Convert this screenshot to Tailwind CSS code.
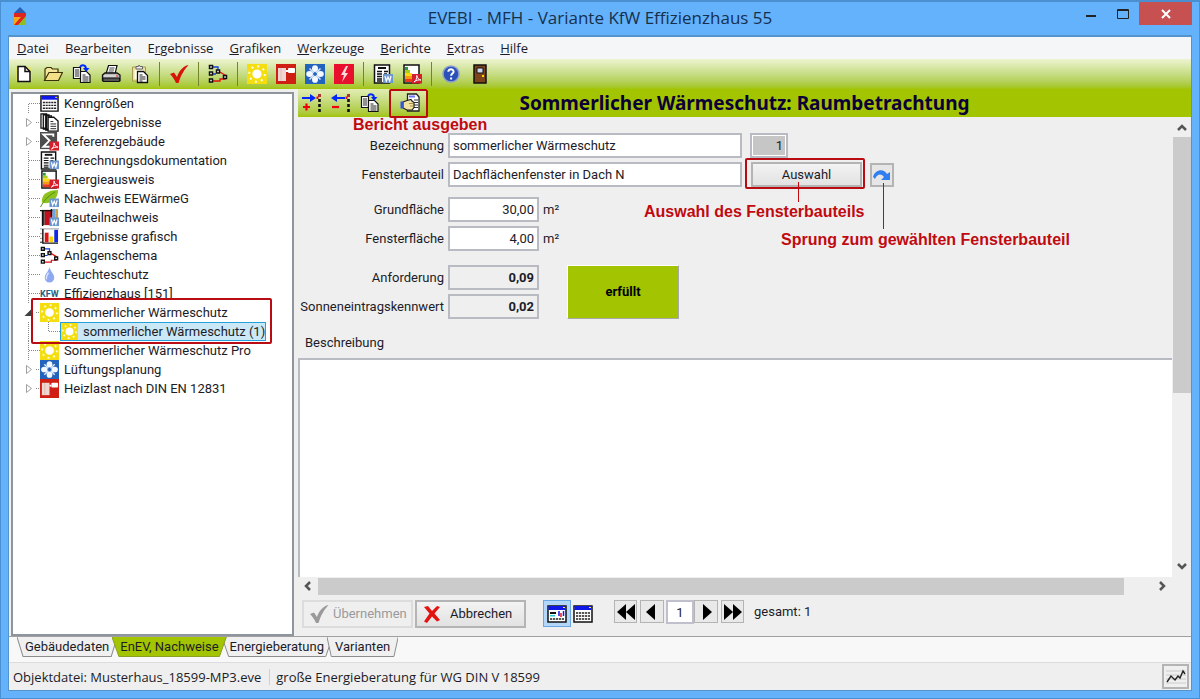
<!DOCTYPE html>
<html lang="de">
<head>
  <meta charset="UTF-8" />
  <meta name="viewport" content="width=device-width, initial-scale=1.0"/>
  <title>EVEBI - MFH - Variante KfW Effizienzhaus 55</title>
  <script src="https://cdn.jsdelivr.net/npm/@tailwindcss/browser@4"></script>
</head>
<body class="min-h-screen flex flex-col bg-[#64b2fc] border border-t-2 border-[#4a90d0] px-[7px] pb-[7px] font-[Roboto,sans-serif] text-[13px] leading-4 text-[#1c1c28]">

  <!-- Icons -->
  <svg class="hidden">
    <symbol id="new" viewBox="0 0 20 20"><path d="M2 3h16v14H2z" fill="#f6e34a" opacity=".5"/><path d="M4 2.500h7l5 5V17.500H4z" fill="#fff" stroke="#111" stroke-width="1.500"/><path d="M11 2.500v5h5" fill="none" stroke="#111" stroke-width="1.500"/></symbol>
    <symbol id="open" viewBox="0 0 20 20"><path d="M2 16V5l2-1.500h4L9.500 5H15v3" fill="#f4e79a" stroke="#3b3208" stroke-width="1.200"/><path d="M1.500 16.500 6 8.500h13.500L15.500 16.500z" fill="#f5e08a" stroke="#3b3208" stroke-width="1.200"/></symbol>
    <symbol id="copy" viewBox="0 0 20 20"><path d="M1.500 3.500h7v11h-7z" fill="#fff" stroke="#111" stroke-width="1.200"/><path d="M3 6h4M3 8h4M3 10h4M3 12h4" stroke="#222"/><path d="M8.500 7.500h6l3.500 3.500v7.500H8.500z" fill="#fff" stroke="#111" stroke-width="1.200"/><path d="M10.500 11h3M10.500 13h6M10.500 15h6M10.500 17h6" stroke="#222"/><path d="M8 3c2-3 6-2 6 2" fill="none" stroke="#0026ff" stroke-width="2"/><path d="M11 4h6.500L14 8z" fill="#0026ff"/></symbol>
    <symbol id="print" viewBox="0 0 20 20"><path d="M5 10 7.500 1.500H16L14 10z" fill="#fff" stroke="#111" stroke-width="1.200"/><path d="M8.500 4h5M8 6h5M7.500 8h5" stroke="#444"/><path d="M1.500 11 4 9h12l3 2v5.500h-17.500z" fill="#b9b9b9" stroke="#111" stroke-width="1.300"/><path d="M2 14h16.500v3.500H2z" fill="#565656" stroke="#111"/><path d="M3 12h13" stroke="#eee"/><path d="M15 12h2" stroke="#e22"/></symbol>
    <symbol id="paste" viewBox="0 0 20 20"><path d="M2.500 3h13v14h-13z" fill="#ecdf9c" stroke="#a79a55"/><path d="M6 2.500h2.500L9 1l1 1.500h2.500V5H6z" fill="#eee" stroke="#666"/><path d="M4.500 6h9v9h-9z" fill="#fffef0"/><path d="M7.500 7.500h6l4 4v7h-10z" fill="#fff" stroke="#111" stroke-width="1.300"/><path d="M9.500 11h3M9.500 13h6M9.500 15h6M9.500 17h3" stroke="#222"/></symbol>
    <symbol id="check" viewBox="0 0 20 20"><path d="M1 10l4-1.500L8 13C10 7 14 2 19.500 1 15 6 12 11 9.500 19H7C5.500 15.500 3.500 12.500 1 10z" fill="currentColor"/></symbol>
    <symbol id="scheme" viewBox="0 0 20 20"><path d="M4 3h6v5h2M4 10h4" fill="none" stroke="#1440e0" stroke-width="1.300"/><path d="M4 17h8v-2h5v-4l-5-3" fill="none" stroke="#e01010" stroke-width="1.300"/><path d="M1.500 1.500h3v3h-3zM1.500 8h3v3h-3zM1.500 15h3v3h-3zM8.500 6h3v3h-3zM15.500 11.500h3v3h-3z" fill="#fff" stroke="#111" stroke-width="1.500"/></symbol>
    <symbol id="sun" viewBox="0 0 20 20"><path d="M0 0h20v20H0z" fill="#f4de10"/><circle cx="10" cy="10" r="7.800" fill="none" stroke="#fffbe0" stroke-width="2" stroke-dasharray="2 4.126"/><circle cx="10" cy="10" r="4.600" fill="#fff"/></symbol>
    <symbol id="heat" viewBox="0 0 20 20"><path d="M0 0h20v20H0z" fill="#cf1f12"/><path d="M2 4h8v13H2z" fill="#efd6d2"/><path d="M5 4v13" stroke="#d9b4af" stroke-width=".8"/><path d="M10 6h2v2h-2z" fill="#fff"/><rect x="12" y="4" width="7" height="5" rx="1" fill="#fff"/></symbol>
    <symbol id="fan" viewBox="0 0 20 20"><path d="M0 0h20v20H0z" fill="#2463bd"/><g fill="#f4f8ff"><ellipse cx="10" cy="4.600" rx="3" ry="3.400"/><ellipse cx="15.400" cy="10" rx="3.400" ry="3"/><ellipse cx="10" cy="15.400" rx="3" ry="3.400"/><ellipse cx="4.600" cy="10" rx="3.400" ry="3"/></g><path d="m4.500 4.500 11 11M15.500 4.500l-11 11" stroke="#dce8fa" stroke-width="1.500"/><circle cx="10" cy="10" r="1.800" fill="#2463bd"/></symbol>
    <symbol id="flash" viewBox="0 0 20 20"><path d="M0 0h20v20H0z" fill="#e8102c"/><path d="M12 2 7 11h3l-2 7 6-9h-3l3-7z" fill="#ffd9de"/></symbol>
    <symbol id="doc" viewBox="0 0 20 20"><path d="M1.500 1h15v18h-15z" fill="#fff" stroke="#111" stroke-width="1.500"/><path d="M5 4h8" stroke="#111" stroke-width="2"/><path d="M4 7.500h5M4 10h5M11 7.500h4M4 12.500h5M4 15h5M4 17h5M11 10h3" stroke="#111" stroke-width="1.300"/></symbol>
    <symbol id="word" viewBox="0 0 20 20"><path d="M10 10h10v9H10z" fill="#6c96cf"/><path d="m12 12 1.300 5 1.700-4 1.700 4 1.300-5" fill="none" stroke="#fff" stroke-width="1.300"/></symbol>
    <symbol id="pdf" viewBox="0 0 20 20"><path d="M10 10h10v9.500H10z" fill="#d3202c"/><path d="M12 18c2-1 3-4 2.800-6.500C15 14 17 16 19 16c-2-.5-5 .3-7 2z" fill="none" stroke="#fff"/></symbol>
    <symbol id="energy" viewBox="0 0 20 20"><path d="M2 1h15v18H2z" fill="#fff" stroke="#111" stroke-width="1.500"/><path d="M3 3h3v3H3z" fill="#2f9a3c"/><path d="M3 6h5v3H3z" fill="#a6cf1c"/><path d="M3 9h7v3H3z" fill="#f9dc10"/><path d="M3 12h8v3H3z" fill="#f59a12"/><path d="M3 15h9v3H3z" fill="#ea3a1c"/></symbol>
    <symbol id="help" viewBox="0 0 20 20"><circle cx="10" cy="10" r="8" fill="#2a51b8" stroke="#8fa0cc" stroke-width="1.500"/><path d="M7.300 7.800c0-3.500 5.500-3.300 5.300 0-.1 1.700-2.500 2-2.500 4M10.100 13.500v2" fill="none" stroke="#fff" stroke-width="2"/></symbol>
    <symbol id="door" viewBox="0 0 20 20"><path d="M4 1h12v18H4z" fill="#7d431b" stroke="#111" stroke-width="1.500"/><path d="M7 4h6v5H7z" fill="#ccd8f0" stroke="#111"/><path d="M12 12h2" stroke="#ffd800" stroke-width="2"/></symbol>
    <symbol id="addrow" viewBox="0 0 20 20"><path d="M0 5h10" stroke="#0026ff" stroke-width="2"/><path d="m8 1 6 4-6 4z" fill="#0026ff"/><path d="M1 14h7M4.500 10.500v7" stroke="#f00010" stroke-width="2.200"/><path d="M17.500 6v13" stroke="#111" stroke-width="2.600" stroke-dasharray="3 2"/><path d="M14.500 3.500h2V6h-2z" fill="#f00010"/><path d="M16 1h3v3h-3z" fill="#a33"/></symbol>
    <symbol id="delrow" viewBox="0 0 20 20"><path d="M4 5h10" stroke="#0026ff" stroke-width="2"/><path d="M6 1 0 5l6 4z" fill="#0026ff"/><path d="M1 14h7" stroke="#f00010" stroke-width="2.200"/><path d="M17.500 6v13" stroke="#111" stroke-width="2.600" stroke-dasharray="3 2"/><path d="M14.500 3.500h2V6h-2z" fill="#f00010"/><path d="M16 1h3v3h-3z" fill="#a33"/></symbol>
    <symbol id="report" viewBox="0 0 20 20"><path d="M7.500 1h9l2.500 3v14H7.500z" fill="#fff" stroke="#222" stroke-width="1.300"/><path d="M9 3.500h6" stroke="#6a78ff" stroke-width="2"/><path d="M14 7h4M14 9.500h4M14 12h4M14 14.500h4" stroke="#333"/><path d="M3 9l4-1.500 4-1 1 1.500 2 1.500v5l-2 2.500H7L3 15z" fill="#f3e3a0" stroke="#222" stroke-width="1.200"/><path d="M9 10.500h4M10 13h4" stroke="#8a7a3c" stroke-width=".8"/><path d="M0.500 8.500H3v7H.5z" fill="#3656d8"/></symbol>
    <symbol id="table" viewBox="0 0 20 20"><path d="M1 2h18v16H1z" fill="#fff" stroke="#111" stroke-width="1.500"/><path d="M1.500 2h17v4h-17z" fill="#1018e8"/><path d="M16 3h2v1h-2z" fill="#fe3"/><path d="M3 9h14M3 12h14M3 15h14" stroke="#222" stroke-width="1.500" stroke-dasharray="2.200 .75"/></symbol>
    <symbol id="form" viewBox="0 0 20 20"><path d="M1 2h18v16H1z" fill="#fff" stroke="#111" stroke-width="1.500"/><path d="M1.500 2h17v4h-17z" fill="#1018e8"/><path d="M16 3h2v1h-2z" fill="#fe3"/><path d="M3 8h6v2H3z" fill="#111"/><path d="M3 11h5v1.500H3z" fill="#2cc"/><path d="M12 7v5M16.500 7v5" stroke="#1018e8" stroke-width="1.500"/><path d="M14 9v4" stroke="#e11" stroke-width="1.500"/><path d="M3 15h14" stroke="#222" stroke-width="1.500" stroke-dasharray="2.200 .75"/></symbol>
    <symbol id="pages" viewBox="0 0 20 20"><path d="M1 1h6v15H1zM3.500 2h6v15h-6zM6 3h6v15H6z" fill="#eee" stroke="#111" stroke-width="1.300"/><path d="M8.500 4.500h6l4.500 4v10.500H8.500z" fill="#fff" stroke="#111" stroke-width="1.400"/><path d="M11 9h3M11 11.500h6M11 14h6M11 16.500h6" stroke="#222"/></symbol>
    <symbol id="sigma" viewBox="0 0 20 20"><path d="M0 0h18v18H0z" fill="#4d4d4d"/><path d="M14 5V2.500H3.500L10 9l-6.500 6.500H12" fill="none" stroke="#fff" stroke-width="2"/></symbol>
    <symbol id="leaf" viewBox="0 0 20 20"><path d="M2 14C1 6 8 1 19 1c0 9-6 14-14 14z" fill="#8dc21f"/><path d="M.5 19C4 12 9 7 16 3" fill="none" stroke="#4f8a10"/></symbol>
    <symbol id="wall" viewBox="0 0 20 20"><path d="M2 2h3v16H2z" fill="#444"/><path d="M5 2h8v16H5z" fill="#c30f1b"/><path d="M13 1h3v17h-3z" fill="#69a7e4"/><path d="M16 1h3v10h-3z" fill="#c9a24c"/><path d="M0 2h13v1.500H0zM2 2h1.500v17H2z" fill="#111"/><path d="M12 1v8" stroke="#111" stroke-width="1.500"/></symbol>
    <symbol id="chart" viewBox="0 0 20 20"><path d="M0 2h20M0 7h3M0 12h3" stroke="#999"/><path d="M3 2v15h16" fill="none" stroke="#111" stroke-width="1.500"/><path d="M5 6h4v10H5z" fill="#e01414"/><path d="M10 10h4v6h-4z" fill="#f2d30c"/><path d="M15 3h4v13h-4z" fill="#1428e0"/><path d="M0 16h3" stroke="#111"/></symbol>
    <symbol id="drop" viewBox="0 0 20 20"><path d="M10 2c1 5 5 7 5 11.500a5 5 0 0 1-10 0C5 9 9 7 10 2z" fill="#8fa8f2"/><path d="M9 8c-2 3-3 5-2 7" stroke="#dbe4ff" stroke-width="1.500" fill="none"/></symbol>
    <!-- Tree connectors -->
    <symbol id="t-first" viewBox="0 0 20 19"><path d="M8.500 19V9.500H20" fill="none" stroke="#888" stroke-dasharray="1 1"/></symbol>
    <symbol id="t-item" viewBox="0 0 20 19"><path d="M8.500 0v19M9 9.500h11" fill="none" stroke="#888" stroke-dasharray="1 1"/></symbol>
    <symbol id="t-last" viewBox="0 0 20 19"><path d="M8.500 0v9.500H20" fill="none" stroke="#888" stroke-dasharray="1 1"/></symbol>
    <symbol id="t-closed" viewBox="0 0 20 19"><path d="M6.500 5.500v8l5-4z" fill="#fff" stroke="#a0a0a0"/><path d="M16 9.500h4" stroke="#888" stroke-dasharray="1 1"/></symbol>
    <symbol id="t-open" viewBox="0 0 20 19"><path d="M11.500 6v7h-7z" fill="#404040"/><path d="M16 9.500h4" stroke="#888" stroke-dasharray="1 1"/></symbol>
  </svg>

  <!-- Title bar -->
  <header class="grid grid-cols-[1fr_auto_1fr] h-[33px]">
    <svg class="w-4 h-5 ml-1 mt-1" viewBox="0 0 16 20"><path d="M2 7 8 1l6 6z" fill="#2c5fb4"/><path d="M2 7h12v12H2z" fill="#f6a817"/><path d="M14 9v10H5z" fill="#8cbf26"/><path d="M2 7h12v3L6 19H2l7-8H2z" fill="#e0261c"/></svg>
    <h1 class="text-[17px] leading-8 text-[#16304c] font-['Open_Sans','Noto_Sans',sans-serif]">EVEBI - MFH - Variante KfW Effizienzhaus 55</h1>
    <div class="flex justify-end">
      <button aria-label="Minimieren" class="w-8 h-6 flex items-center justify-center"><svg class="w-3 h-3" viewBox="0 0 12 12"><path d="M1 8h10" stroke="#222" stroke-width="2"/></svg></button>
      <button aria-label="Maximieren" class="w-8 h-6 flex items-center justify-center"><svg class="w-3 h-3" viewBox="0 0 12 12"><path d="M.5 1.500h11v9H.5zM1 2.500h10" fill="none" stroke="#222"/></svg></button>
      <button aria-label="Schließen" class="w-[53px] h-[23px] bg-[#c75050] flex items-center justify-center"><svg class="w-3 h-3" viewBox="0 0 12 12"><path d="m2 2 8 8M10 2l-8 8" stroke="#fff" stroke-width="2"/></svg></button>
    </div>
  </header>

  <div class="flex-1 flex flex-col bg-[#efefef] border border-t-2 border-[#5593cd]">
    <!-- Menu -->
    <nav class="flex gap-4 h-[22px] items-center px-2 bg-[#f4f6f8] font-['Open_Sans','Noto_Sans',sans-serif]">
      <a href="#"><u>D</u>atei</a>
      <a href="#">Be<u>a</u>rbeiten</a>
      <a href="#">E<u>r</u>gebnisse</a>
      <a href="#"><u>G</u>rafiken</a>
      <a href="#"><u>W</u>erkzeuge</a>
      <a href="#"><u>B</u>erichte</a>
      <a href="#"><u>E</u>xtras</a>
      <a href="#"><u>H</u>ilfe</a>
    </nav>

    <!-- Toolbar -->
    <div class="flex items-center gap-[9px] h-[30px] px-[5px] bg-linear-to-b from-[#edf4d0] to-[#a3c400]">
      <button aria-label="Neu"><svg class="block size-5"><use href="#new"/></svg></button>
      <button aria-label="Öffnen"><svg class="block size-5"><use href="#open"/></svg></button>
      <button aria-label="Kopieren"><svg class="block size-5"><use href="#copy"/></svg></button>
      <button aria-label="Drucken"><svg class="block size-5"><use href="#print"/></svg></button>
      <button aria-label="Einfügen"><svg class="block size-5"><use href="#paste"/></svg></button>
      <span class="w-px h-6 bg-[#76842c]"></span>
      <button aria-label="Prüfen" class="text-[#d81408]"><svg class="block size-5"><use href="#check"/></svg></button>
      <span class="w-px h-6 bg-[#76842c]"></span>
      <button aria-label="Anlagenschema"><svg class="block size-5"><use href="#scheme"/></svg></button>
      <span class="w-px h-6 bg-[#76842c]"></span>
      <button aria-label="Sommerlicher Wärmeschutz"><svg class="block size-5"><use href="#sun"/></svg></button>
      <button aria-label="Heizlast"><svg class="block size-5"><use href="#heat"/></svg></button>
      <button aria-label="Lüftung"><svg class="block size-5"><use href="#fan"/></svg></button>
      <button aria-label="Strom"><svg class="block size-5"><use href="#flash"/></svg></button>
      <span class="w-px h-6 bg-[#76842c]"></span>
      <button aria-label="Dokumentation"><svg class="block size-5"><use href="#doc"/><use href="#word"/></svg></button>
      <button aria-label="Energieausweis"><svg class="block size-5"><use href="#energy"/><use href="#pdf"/></svg></button>
      <span class="w-px h-6 bg-[#76842c]"></span>
      <button aria-label="Hilfe"><svg class="block size-5"><use href="#help"/></svg></button>
      <button aria-label="Beenden"><svg class="block size-5"><use href="#door"/></svg></button>
    </div>

    <div class="flex-1 flex gap-1 pl-[2px]">
      <!-- Tree -->
      <aside class="w-[283px] shrink-0 mt-[3px] bg-white border-2 border-[#8e959c]">
        <ul class="pl-[7px]">
          <li class="flex h-[19px] items-center"><svg class="w-5 h-[19px]"><use href="#t-first"/></svg><svg class="size-[19px]"><use href="#table"/></svg><span class="pl-[5px]">Kenngrößen</span></li>
          <li class="flex h-[19px] items-center"><svg class="w-5 h-[19px]"><use href="#t-closed"/></svg><svg class="size-[19px]"><use href="#pages"/></svg><span class="pl-[5px]">Einzelergebnisse</span></li>
          <li class="flex h-[19px] items-center"><svg class="w-5 h-[19px]"><use href="#t-closed"/></svg><svg class="size-[19px]"><use href="#sigma"/><use href="#pdf"/></svg><span class="pl-[5px]">Referenzgebäude</span></li>
          <li class="flex h-[19px] items-center"><svg class="w-5 h-[19px]"><use href="#t-item"/></svg><svg class="size-[19px]"><use href="#doc"/><use href="#word"/></svg><span class="pl-[5px]">Berechnungsdokumentation</span></li>
          <li class="flex h-[19px] items-center"><svg class="w-5 h-[19px]"><use href="#t-item"/></svg><svg class="size-[19px]"><use href="#energy"/><use href="#pdf"/></svg><span class="pl-[5px]">Energieausweis</span></li>
          <li class="flex h-[19px] items-center"><svg class="w-5 h-[19px]"><use href="#t-item"/></svg><svg class="size-[19px]"><use href="#leaf"/><use href="#word"/></svg><span class="pl-[5px]">Nachweis EEWärmeG</span></li>
          <li class="flex h-[19px] items-center"><svg class="w-5 h-[19px]"><use href="#t-item"/></svg><svg class="size-[19px]"><use href="#wall"/><use href="#word"/></svg><span class="pl-[5px]">Bauteilnachweis</span></li>
          <li class="flex h-[19px] items-center"><svg class="w-5 h-[19px]"><use href="#t-item"/></svg><svg class="size-[19px]"><use href="#chart"/></svg><span class="pl-[5px]">Ergebnisse grafisch</span></li>
          <li class="flex h-[19px] items-center"><svg class="w-5 h-[19px]"><use href="#t-item"/></svg><svg class="size-[19px]"><use href="#scheme"/></svg><span class="pl-[5px]">Anlagenschema</span></li>
          <li class="flex h-[19px] items-center"><svg class="w-5 h-[19px]"><use href="#t-item"/></svg><svg class="size-[19px]"><use href="#drop"/></svg><span class="pl-[5px]">Feuchteschutz</span></li>
          <li class="flex h-[19px] items-center"><svg class="w-5 h-[19px]"><use href="#t-item"/></svg><span class="w-[19px] text-[9px] font-bold text-[#1f5f82]">KFW</span><span class="pl-[5px]">Effizienzhaus [151]</span></li>
          <li class="relative">
            <div class="flex h-[19px] items-center"><svg class="w-5 h-[19px]"><use href="#t-open"/></svg><svg class="size-[19px]"><use href="#sun"/></svg><span class="pl-[5px]">Sommerlicher Wärmeschutz</span></div>
            <div class="flex h-[19px] items-center">
              <svg class="w-5 h-[19px]"><path d="M8.500 0v19" stroke="#888" stroke-dasharray="1 1"/></svg>
              <svg class="w-5 h-[19px]"><use href="#t-last"/></svg>
              <span class="flex items-center h-[19px] bg-[#cbe8f6] border border-[#26a0da]"><svg class="size-[17px]"><use href="#sun"/></svg><span class="pl-[5px]">sommerlicher Wärmeschutz (1)</span></span>
            </div>
            <span class="absolute -top-[5px] left-[11px] w-[241px] h-[46px] rounded-xs border-2 border-[#b80c12]"></span>
          </li>
          <li class="flex h-[19px] items-center"><svg class="w-5 h-[19px]"><use href="#t-item"/></svg><svg class="size-[19px]"><use href="#sun"/></svg><span class="pl-[5px]">Sommerlicher Wärmeschutz Pro</span></li>
          <li class="flex h-[19px] items-center"><svg class="w-5 h-[19px]"><use href="#t-closed"/></svg><svg class="size-[19px]"><use href="#fan"/></svg><span class="pl-[5px]">Lüftungsplanung</span></li>
          <li class="flex h-[19px] items-center"><svg class="w-5 h-[19px]"><use href="#t-closed"/></svg><svg class="size-[19px]"><use href="#heat"/></svg><span class="pl-[5px]">Heizlast nach DIN EN 12831</span></li>
        </ul>
      </aside>

      <!-- Detail panel -->
      <main class="flex-1 flex flex-col">
        <div class="grid grid-cols-[1fr_auto_1fr] h-7 bg-[#a3c400]">
          <div class="relative justify-self-start flex items-center gap-[9px] w-[130px] px-1 bg-linear-to-b from-[#e2edb4] to-[#a3c400]">
            <button aria-label="Zeile einfügen"><svg class="block size-5"><use href="#addrow"/></svg></button>
            <button aria-label="Zeile löschen"><svg class="block size-5"><use href="#delrow"/></svg></button>
            <button aria-label="Kopieren"><svg class="block size-5"><use href="#copy"/></svg></button>
            <button aria-label="Bericht ausgeben" class="ml-auto mr-1"><svg class="block size-5"><use href="#report"/></svg></button>
            <span class="absolute top-0 right-0 w-[39px] h-[29px] rounded-xs border-2 border-[#b80c12]"></span>
            <span class="absolute top-7 left-[55px] whitespace-nowrap font-bold text-base leading-4 text-[#c00a10] font-['Liberation_Sans',sans-serif]">Bericht ausgeben</span>
          </div>
          <h2 class="text-[19px] leading-7 font-bold text-[#0c0038] font-['Noto_Sans',sans-serif]">Sommerlicher Wärmeschutz: Raumbetrachtung</h2>
        </div>

        <div class="flex-1 flex">
          <div class="flex-1 flex flex-col">
            <form class="relative pt-4">
              <div class="flex items-center gap-1 h-[25px]">
                <label for="name" class="w-[146px] text-right">Bezeichnung</label>
                <input id="name" type="text" value="sommerlicher Wärmeschutz" class="w-[294px] h-full px-[3px] bg-white border-2 border-[#b9bbc2]">
                <input type="text" aria-label="Nummer" value="1" readonly class="w-[38px] h-full ml-1 px-[3px] text-right bg-[#c6c6c6] border-2 border-[#b9bbc2] outline outline-white -outline-offset-3">
              </div>
              <div class="flex items-center gap-1 h-[25px] mt-1">
                <label for="part" class="w-[146px] text-right">Fensterbauteil</label>
                <input id="part" type="text" value="Dachflächenfenster in Dach N" class="w-[294px] h-full px-[3px] bg-white border-2 border-[#b9bbc2]">
                <button type="button" class="w-[111px] h-full ml-[5px] bg-linear-to-b from-[#f3f3f3] to-[#e2e2e2] border-2 border-[#b4b4b4]">Auswahl</button>
                <button type="button" aria-label="Zum Fensterbauteil springen" class="w-6 h-6 ml-1 flex items-center justify-center bg-[#e6e6e6] border-2 border-[#b4b4b4]"><svg class="w-5 h-5 shrink-0" viewBox="0 0 20 20"><path d="M1 12C3 4 12 3 15 9l3-2v8H9l3-3C9 8 5 9 3 14z" fill="#2f7ff0"/></svg></button>
              </div>
              <div class="flex items-center gap-1 h-[25px] mt-[10px]">
                <label for="floor" class="w-[146px] text-right">Grundfläche</label>
                <input id="floor" type="text" value="30,00" class="w-[91px] h-full px-[3px] text-right bg-white border-2 border-[#b9bbc2]">
                <span>m²</span>
              </div>
              <div class="flex items-center gap-1 h-[25px] mt-1">
                <label for="window" class="w-[146px] text-right">Fensterfläche</label>
                <input id="window" type="text" value="4,00" class="w-[91px] h-full px-[3px] text-right bg-white border-2 border-[#b9bbc2]">
                <span>m²</span>
              </div>
              <div class="flex gap-7 mt-[14px]">
                <div class="flex flex-col gap-1">
                  <div class="flex items-center gap-1 h-[25px]">
                    <label for="limit" class="w-[146px] text-right">Anforderung</label>
                    <input id="limit" type="text" value="0,09" readonly class="w-[91px] h-full px-[3px] text-right font-bold border-2 border-[#b9bbc2]">
                  </div>
                  <div class="flex items-center gap-1 h-[25px]">
                    <label for="actual" class="w-[146px] text-right">Sonneneintragskennwert</label>
                    <input id="actual" type="text" value="0,02" readonly class="w-[91px] h-full px-[3px] text-right font-bold border-2 border-[#b9bbc2]">
                  </div>
                </div>
                <output class="w-28 flex items-center justify-center bg-[#a3c400] border border-t-white border-l-white border-[#a8a8a8] font-bold text-black">erfüllt</output>
              </div>
              <label for="notes" class="block mt-4 mb-[7px] ml-[7px]">Beschreibung</label>

              <!-- Callouts -->
              <span class="absolute top-[41px] left-[447px] w-[120px] h-[31px] rounded-xs border-2 border-[#b80c12]"></span>
              <span class="absolute top-[65px] left-[500px] w-px h-5 bg-[#c00a10]"></span>
              <span class="absolute top-[87px] left-[346px] whitespace-nowrap font-bold text-base leading-4 text-[#c00a10] font-['Liberation_Sans',sans-serif]">Auswahl des Fensterbauteils</span>
              <span class="absolute top-[66px] left-[585px] w-px h-[46px] bg-[#c00a10]"></span>
              <span class="absolute top-[115px] left-[483px] whitespace-nowrap font-bold text-base leading-4 text-[#c00a10] font-['Liberation_Sans',sans-serif]">Sprung zum gewählten Fensterbauteil</span>
            </form>
            <textarea id="notes" class="flex-1 block w-full resize-none bg-white border-t-2 border-l-2 border-[#b9bbc2]"></textarea>
          </div>
          <!-- Vertical scrollbar -->
          <div class="w-[19px] flex flex-col items-center">
            <svg class="w-[18px] h-5" viewBox="0 0 18 20"><path d="m5 13 4-4 4 4" fill="none" stroke="#555" stroke-width="2.500"/></svg>
            <div class="w-[18px] h-64 bg-[#cbcbcb]"></div>
            <svg class="w-[18px] h-5 mt-auto" viewBox="0 0 18 20"><path d="m5 7 4 4 4-4" fill="none" stroke="#555" stroke-width="2.500"/></svg>
          </div>
        </div>
        <!-- Horizontal scrollbar -->
        <div class="flex items-center h-[18px] pr-[19px]">
          <svg class="w-5 h-4" viewBox="0 0 20 16"><path d="m12 4-4 4 4 4" fill="none" stroke="#555" stroke-width="2.500"/></svg>
          <div class="flex-1 h-[17px] bg-[#cbcbcb]"></div>
          <svg class="w-5 h-4 ml-7" viewBox="0 0 20 16"><path d="m8 4 4 4-4 4" fill="none" stroke="#555" stroke-width="2.500"/></svg>
        </div>

        <!-- Record navigation -->
        <div class="flex items-start pt-[5px] pl-1 pb-2">
          <button disabled class="flex items-center gap-1 w-[111px] h-7 px-[5px] border-2 border-[#dcdcdc] text-[#9a9a9a]"><svg class="size-5 shrink-0"><use href="#check"/></svg>Übernehmen</button>
          <button class="flex items-center gap-2 w-[111px] h-7 ml-[2px] px-[5px] bg-linear-to-b from-[#f3f3f3] to-[#e2e2e2] border-2 border-[#b4b4b4]"><svg class="size-5 shrink-0" viewBox="0 0 20 20"><path d="M2 3l4-1 4 5 5-5 3 1-5.500 6.500L18 16l-3 1.500-5-5-5 6.500-3-1.500 5.500-8z" fill="#e21410"/></svg>Abbrechen</button>
          <button aria-label="Formular" class="w-7 h-[27px] ml-[17px] flex items-center justify-center bg-[#b4d6f8] border border-[#6aa8e4]"><svg class="size-5"><use href="#form"/></svg></button>
          <button aria-label="Tabelle" class="h-[27px] ml-[2px]"><svg class="block size-5"><use href="#table"/></svg></button>
          <button aria-label="Erster" class="w-[23px] h-[23px] ml-[21px] flex items-center justify-center bg-[#e9e9e9] border border-[#b4b4b4]"><svg class="w-5 h-5 shrink-0" viewBox="0 0 20 20"><path d="M10 2v16L1 10zM19 2v16l-9-8z"/></svg></button>
          <button aria-label="Zurück" class="w-6 h-[23px] ml-[3px] flex items-center justify-center bg-[#e9e9e9] border border-[#b4b4b4]"><svg class="w-5 h-5 shrink-0" viewBox="0 0 20 20"><path d="M13 2v16l-9-8z"/></svg></button>
          <input type="text" aria-label="Datensatz" value="1" class="w-7 h-6 ml-[2px] text-center bg-white border-2 border-[#c0c0cc]">
          <button aria-label="Weiter" class="w-6 h-[23px] flex items-center justify-center bg-[#e9e9e9] border border-[#b4b4b4]"><svg class="w-5 h-5 shrink-0" viewBox="0 0 20 20"><path d="M7 2v16l9-8z"/></svg></button>
          <button aria-label="Letzter" class="w-[23px] h-[23px] ml-[3px] flex items-center justify-center bg-[#e9e9e9] border border-[#b4b4b4]"><svg class="w-5 h-5 shrink-0" viewBox="0 0 20 20"><path d="M1 2v16l9-8zM10 2v16l9-8z"/></svg></button>
          <span class="pl-[10px] pt-1">gesamt: 1</span>
        </div>
      </main>
    </div>

    <!-- Tabs -->
    <div class="flex items-start h-[26px] pl-2 bg-[#f8f8f8] border-t border-[#a0a0a0]">
      <button class="relative h-5 px-2"><svg class="absolute inset-0 w-full h-full" viewBox="0 0 100 20" preserveAspectRatio="none"><path d="M0 0l6 19.500h88L100 0" fill="#f0f0f0" stroke="#8c8c8c" vector-effect="non-scaling-stroke"/></svg><span class="relative">Gebäudedaten</span></button>
      <button class="relative z-10 h-5 px-2 -ml-[5px]"><svg class="absolute inset-0 w-full h-full" viewBox="0 0 100 20" preserveAspectRatio="none"><path d="M0 0l6 19.500h88L100 0" fill="#a3c400" stroke="#8ca020" vector-effect="non-scaling-stroke"/></svg><span class="relative">EnEV, Nachweise</span></button>
      <button class="relative h-5 px-2 -ml-[5px]"><svg class="absolute inset-0 w-full h-full" viewBox="0 0 100 20" preserveAspectRatio="none"><path d="M0 0l6 19.500h88L100 0" fill="#f0f0f0" stroke="#8c8c8c" vector-effect="non-scaling-stroke"/></svg><span class="relative">Energieberatung</span></button>
      <button class="relative h-5 px-2 -ml-[5px]"><svg class="absolute inset-0 w-full h-full" viewBox="0 0 100 20" preserveAspectRatio="none"><path d="M0 0l6 19.500h88L100 0" fill="#f0f0f0" stroke="#8c8c8c" vector-effect="non-scaling-stroke"/></svg><span class="relative">Varianten</span></button>
    </div>

    <!-- Status bar -->
    <footer class="flex items-center h-7 pl-1 pr-[2px] border-t border-[#dcdcdc] font-['Open_Sans','Noto_Sans',sans-serif]">
      <span class="pr-2 border-r border-[#d0d0d0]">Objektdatei: Musterhaus_18599-MP3.eve</span>
      <span class="pl-[6px]">große Energieberatung für WG DIN V 18599</span>
      <button aria-label="Verlauf" class="ml-auto w-[27px] h-[25px] border-2 border-[#b4b4b4] flex items-center justify-center"><svg class="w-5 h-4" viewBox="0 0 20 16"><path d="M0 2h20M0 6h20M0 10h20M0 14h20" stroke="#ccc"/><path d="m1 13 4-6 4 4 3-4 2 2 3-7 2 3" fill="none" stroke="#222" stroke-width="1.400"/></svg></button>
    </footer>
  </div>
</body>
</html>
